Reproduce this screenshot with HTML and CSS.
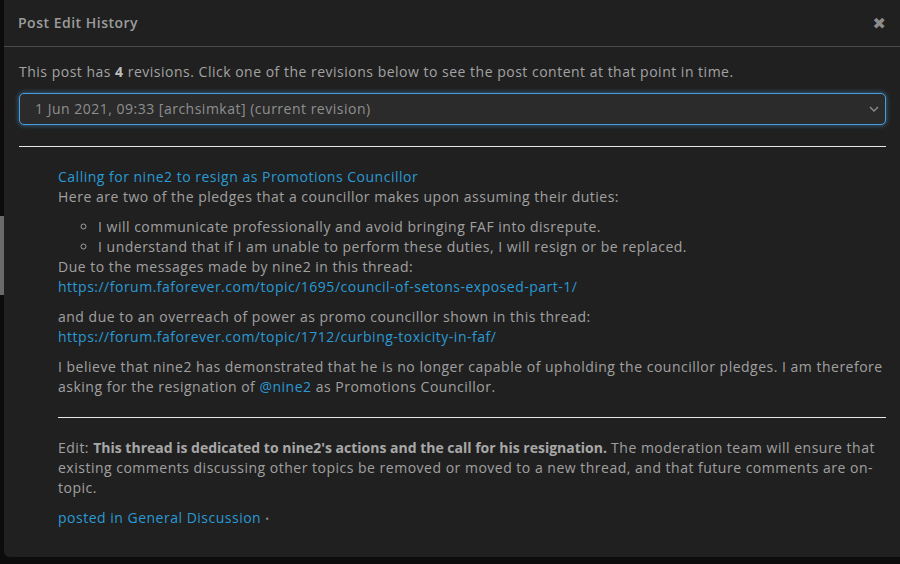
FILE: index.html
```html
<!DOCTYPE html>
<html>
<head>
<meta charset="utf-8">
<link rel="stylesheet" href="styles.css">
</head>
<body>
<div class="page-strip">
  <div class="strip-bar"></div>
</div>
<div class="modal">
  <div class="modal-header">
    <span class="modal-title">Post Edit History</span>
    <span class="close">&#10006;</span>
  </div>
  <div class="modal-body">
    <p class="intro">This post has <strong>4</strong> revisions. Click one of the revisions below to see the post content at that point in time.</p>
    <div class="select">
      <span>1 Jun 2021, 09:33 [archsimkat] (current revision)</span>
      <svg class="chev" width="10" height="6" viewBox="0 0 10 6"><path d="M1 1 L5 5 L9 1" fill="none" stroke="#8a8a8a" stroke-width="1.4"/></svg>
    </div>
    <hr class="rule">
    <div class="post">
      <a class="link">Calling for nine2 to resign as Promotions Councillor</a>
      <div>Here are two of the pledges that a councillor makes upon assuming their duties:</div>
      <ul class="pledges">
        <li>I will communicate professionally and avoid bringing FAF into disrepute.</li>
        <li>I understand that if I am unable to perform these duties, I will resign or be replaced.</li>
      </ul>
      <div>Due to the messages made by nine2 in this thread:</div>
      <a class="link">https://forum.faforever.com/topic/1695/council-of-setons-exposed-part-1/</a>
      <p class="para">and due to an overreach of power as promo councillor shown in this thread:<br><a class="link">https://forum.faforever.com/topic/1712/curbing-toxicity-in-faf/</a></p>
      <p class="para">I believe that nine2 has demonstrated that he is no longer capable of upholding the councillor pledges. I am therefore asking for the resignation of <a class="link">@nine2</a> as Promotions Councillor.</p>
      <hr class="rule inner">
      <p class="edit">Edit: <strong>This thread is dedicated to nine2's actions and the call for his resignation.</strong> The moderation team will ensure that existing comments discussing other topics be removed or moved to a new thread, and that future comments are on-topic.</p>
      <p class="para"><a class="link">posted in General Discussion</a> <span class="dot">&bull;</span></p>
    </div>
  </div>
</div>
</body>
</html>
```
FILE: styles.css
```css
html, body {
  margin: 0;
  padding: 0;
  background: #0c0c0c;
  width: 900px;
  height: 564px;
  overflow: hidden;
  font-family: "Open Sans", "DejaVu Sans", sans-serif;
  font-size: 14px;
  line-height: 20px;
  letter-spacing: 0.5px;
  color: #a0a0a0;
}
.page-strip {
  position: absolute;
  left: 0;
  top: 0;
  width: 4px;
  height: 564px;
}
.strip-bar {
  margin-top: 216px;
  width: 4px;
  height: 79px;
  background: #6a6a6a;
}
.modal {
  position: absolute;
  left: 4px;
  top: -8px;
  width: 910px;
  height: 565px;
  background: #202020;
  border-radius: 6px;
  box-sizing: border-box;
}
.modal-header {
  display: flex;
  justify-content: space-between;
  align-items: center;
  height: 55px;
  padding: 7px 14px 0 14px;
  box-sizing: border-box;
  border-bottom: 1px solid #4a4a4a;
}
.modal-title {
  font-size: 14px;
  font-weight: 600;
  letter-spacing: 0.5px;
  color: #9c9c9c;
}
.close {
  font-size: 16px;
  color: #8c8c8c;
  margin-right: 14px;
  letter-spacing: 0;
}
.modal-body {
  padding: 15px 28px 0 15px;
}
.intro {
  margin: 0;
  color: #a3a3a3;
}
.intro strong { color: #bdbdbd; }
.select {
  margin-top: 11px;
  height: 32px;
  box-sizing: border-box;
  border: 1px solid #4a9ddc;
  border-radius: 5px;
  box-shadow: 0 0 4px 1px rgba(74,157,220,0.45);
  background: #2b2b2b;
  display: flex;
  align-items: center;
  justify-content: space-between;
  padding: 0 6px 0 15px;
  color: #8f8f8f;
}
.rule {
  border: 0;
  height: 1px;
  background: #e6e6e6;
  margin: 21px 0 20px 0;
}
.post {
  padding-left: 39px;
}
.link {
  color: #2a9ad4;
  text-decoration: none;
  display: inline;
}
.post > a.link { display: block; }
.pledges {
  margin: 10px 0 0 0;
  padding-left: 40px;
  list-style: circle;
}
.para {
  margin: 10px 0 0 0;
}
.rule.inner {
  margin: 20px 0 20px 0;
}
.edit {
  margin: 0;
}
.edit strong { color: #a8a8a8; letter-spacing: 0; }
.dot { color: #8a8a8a; font-size: 10px; }
```
